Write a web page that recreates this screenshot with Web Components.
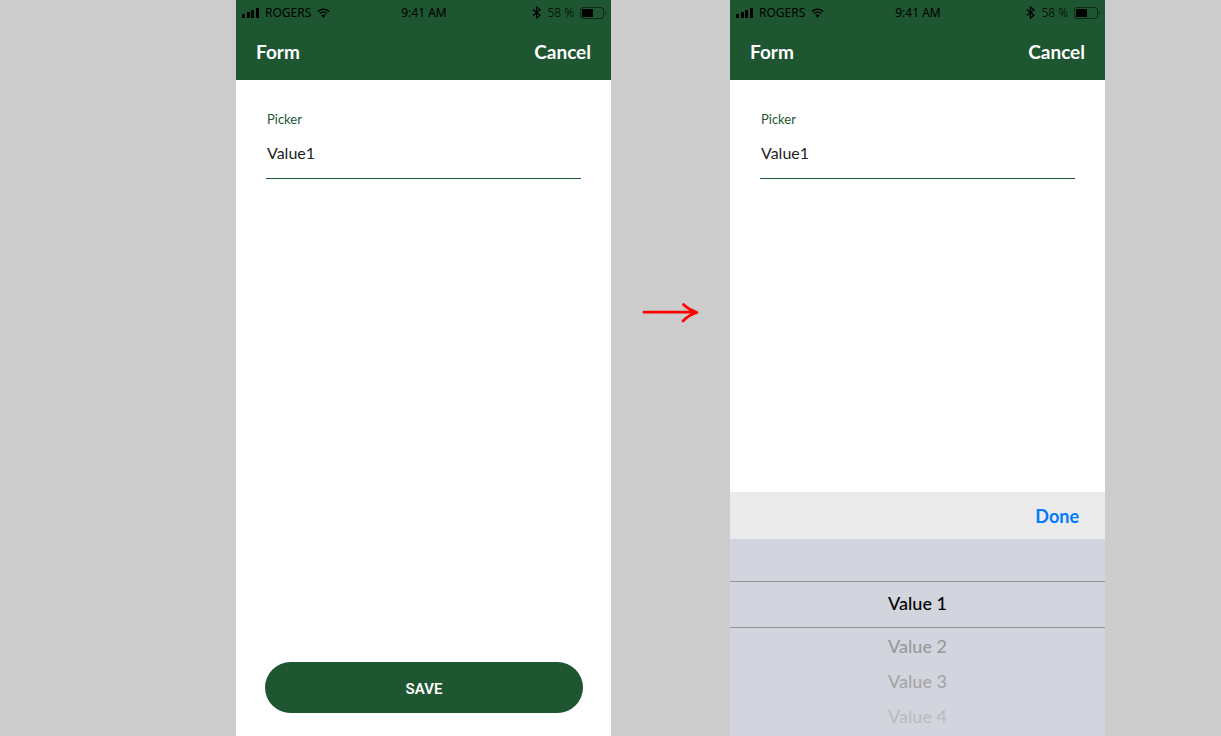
<!DOCTYPE html>
<html lang="en">
<head>
<meta charset="UTF-8">
<meta name="viewport" content="width=device-width, initial-scale=1">
<title>Form picker</title>
<style>
    body {
        margin: 0;
        background-color: #cccccc;
        font-family: Lato, sans-serif;
    }
</style>
</head>
<body>
<picker-flow>
    <phone-screen slot="before">
        <status-bar slot="status" carrier="ROGERS" time="9:41 AM" battery="58 %"></status-bar>
        <nav-bar slot="nav" main-text="Form" action="Cancel"></nav-bar>
        <picker-field label="Picker" value="Value1"></picker-field>
        <save-button slot="bottom">SAVE</save-button>
    </phone-screen>
    <flow-arrow slot="arrow"></flow-arrow>
    <phone-screen slot="after">
        <status-bar slot="status" carrier="ROGERS" time="9:41 AM" battery="58 %"></status-bar>
        <nav-bar slot="nav" main-text="Form" action="Cancel"></nav-bar>
        <picker-field label="Picker" value="Value1"></picker-field>
        <picker-wheel slot="bottom" done="Done" values="Value 1,Value 2,Value 3,Value 4"></picker-wheel>
    </phone-screen>
</picker-flow>

<script>
class PickerFlow extends HTMLElement {
    constructor() {
        super();
        this.attachShadow({ mode: "open" });
        this.shadowRoot.innerHTML = `
            <style>
                :host {
                    display: grid;
                    grid-template-columns: 236fr 375fr 119fr 375fr 116fr;
                    min-height: 100vh;
                }
                .before { grid-column: 2; }
                .arrow { grid-column: 3; }
                .after { grid-column: 4; }
                .before, .after {
                    display: grid;
                }
            </style>
            <div class="before"><slot name="before"></slot></div>
            <div class="arrow"><slot name="arrow"></slot></div>
            <div class="after"><slot name="after"></slot></div>
        `;
    }
}
customElements.define("picker-flow", PickerFlow);

class PhoneScreen extends HTMLElement {
    constructor() {
        super();
        this.attachShadow({ mode: "open" });
        this.shadowRoot.innerHTML = `
            <style>
                :host {
                    display: flex;
                    flex-direction: column;
                    background-color: #ffffff;
                }
                header {
                    background-color: #1e5631;
                }
                main {
                    flex: 1;
                    padding: 29px 30px 0;
                }
            </style>
            <header>
                <slot name="status"></slot>
                <slot name="nav"></slot>
            </header>
            <main><slot></slot></main>
            <slot name="bottom"></slot>
        `;
    }
}
customElements.define("phone-screen", PhoneScreen);

class StatusBar extends HTMLElement {
    constructor() {
        super();
        this.attachShadow({ mode: "open" });
        this.shadowRoot.innerHTML = `
            <style>
                :host {
                    display: grid;
                    grid-template-columns: 1fr auto 1fr;
                    align-items: center;
                    height: 25px;
                    padding: 0 5px 0 6px;
                    font-family: "Noto Sans", sans-serif;
                    font-size: 12px;
                    color: #000000;
                }
                .left, .right {
                    display: flex;
                    align-items: center;
                }
                .left { gap: 6px; }
                .right {
                    justify-content: flex-end;
                    gap: 6px;
                }
                .battery {
                    font-weight: 300;
                }
                svg {
                    display: block;
                    flex: none;
                }
            </style>
            <div class="left">
                <svg width="17" height="12" viewBox="0 0 17 12" aria-hidden="true">
                    <path d="M0 7h3v4H0zM5 5h3v6H5zM9 3h3v8H9zM14 1h3v10h-3z"/>
                </svg>
                <span>${this.getAttribute("carrier")}</span>
                <svg width="13" height="10" viewBox="0 0 13 10" aria-hidden="true">
                    <path d="M.8 3.6Q6.5-1 12.2 3.6M2.8 5.7Q6.5 2.6 10.2 5.7" fill="none" stroke="#000" stroke-width="1.4"/>
                    <path d="M4.3 7.3Q6.5 5.6 8.7 7.3L6.5 9.7z"/>
                </svg>
            </div>
            <span>${this.getAttribute("time")}</span>
            <div class="right">
                <svg width="9" height="13" viewBox="0 0 9 13" aria-hidden="true">
                    <path d="M1 3.5L8 9.2 4.5 12V1L8 3.8 1 9.5" fill="none" stroke="#000" stroke-width="1.2"/>
                </svg>
                <span class="battery">${this.getAttribute("battery")}</span>
                <svg width="26" height="12" viewBox="0 0 26 12" aria-hidden="true">
                    <rect x=".5" y=".5" width="23" height="11" rx="2.5" fill="none" stroke="#0d2b17"/>
                    <rect x="2" y="2" width="11" height="8"/>
                    <path d="M25 4q2 2 0 4z" fill="#0d2b17"/>
                </svg>
            </div>
        `;
    }
}
customElements.define("status-bar", StatusBar);

class NavBar extends HTMLElement {
    constructor() {
        super();
        this.attachShadow({ mode: "open" });
        this.shadowRoot.innerHTML = `
            <style>
                :host {
                    display: flex;
                    align-items: center;
                    justify-content: space-between;
                    height: 55px;
                    padding: 0 20px;
                    color: #ffffff;
                }
                h1, button {
                    margin: 0;
                    padding: 0 0 2px;
                    font: inherit;
                    font-size: 19px;
                    font-weight: 700;
                }
                button {
                    border: none;
                    background: none;
                    color: inherit;
                    cursor: pointer;
                }
            </style>
            <h1>${this.getAttribute("main-text")}</h1>
            <button type="button">${this.getAttribute("action")}</button>
        `;
    }
}
customElements.define("nav-bar", NavBar);

class PickerField extends HTMLElement {
    constructor() {
        super();
        this.attachShadow({ mode: "open" });
        this.shadowRoot.innerHTML = `
            <style>
                :host {
                    display: flex;
                    flex-direction: column;
                }
                label {
                    padding-left: 1px;
                    font-size: 13px;
                    line-height: 20px;
                    color: #1e5631;
                }
                select {
                    appearance: none;
                    height: 50px;
                    margin: 0;
                    padding: 0 0 3px 1px;
                    border: none;
                    border-bottom: 1px solid #1e5631;
                    border-radius: 0;
                    background: none;
                    font: inherit;
                    font-size: 16px;
                    color: #222222;
                }
            </style>
            <label for="picker">${this.getAttribute("label")}</label>
            <select id="picker">
                <option>${this.getAttribute("value")}</option>
            </select>
        `;
    }
}
customElements.define("picker-field", PickerField);

class SaveButton extends HTMLElement {
    constructor() {
        super();
        this.attachShadow({ mode: "open" });
        this.shadowRoot.innerHTML = `
            <style>
                :host {
                    display: flex;
                    padding: 0 28px 23px 29px;
                }
                button {
                    flex: 1;
                    height: 51px;
                    padding: 2px 0 0;
                    border: none;
                    border-radius: 26px;
                    background-color: #1e5631;
                    color: #ffffff;
                    font-family: Roboto, sans-serif;
                    font-size: 15px;
                    font-weight: 600;
                    cursor: pointer;
                }
            </style>
            <button type="button"><slot></slot></button>
        `;
    }
}
customElements.define("save-button", SaveButton);

class PickerWheel extends HTMLElement {
    constructor() {
        super();
        this.attachShadow({ mode: "open" });
        const values = this.getAttribute("values").split(",");
        this.shadowRoot.innerHTML = `
            <style>
                :host {
                    display: block;
                    background-color: #d2d5dd;
                }
                button {
                    padding: 0;
                    border: none;
                    background: none;
                    font: inherit;
                    font-size: 18px;
                    cursor: pointer;
                }
                .toolbar {
                    display: flex;
                    justify-content: flex-end;
                    height: 47px;
                    padding: 0 26px;
                    background-color: #ebebeb;
                }
                .done {
                    font-weight: 700;
                    color: #007aff;
                }
                .values {
                    display: flex;
                    flex-direction: column;
                    padding: 42px 0 1px;
                }
                .values button {
                    height: 35px;
                    padding-bottom: 4px;
                    font-weight: 500;
                    color: #999999;
                }
                .values button:first-child {
                    height: 47px;
                    margin-bottom: 2px;
                    border-top: 1px solid #939499;
                    border-bottom: 1px solid #939499;
                    color: #000000;
                }
                .values button:nth-child(3) { color: #a5a5a7; }
                .values button:nth-child(4) { color: #bbbcc0; }
            </style>
            <div class="toolbar">
                <button class="done" type="button">${this.getAttribute("done")}</button>
            </div>
            <div class="values" role="listbox" aria-label="Picker">
                ${values.map((v, i) => `<button type="button" role="option" aria-selected="${i === 0}">${v}</button>`).join("")}
            </div>
        `;
    }
}
customElements.define("picker-wheel", PickerWheel);

class FlowArrow extends HTMLElement {
    constructor() {
        super();
        this.attachShadow({ mode: "open" });
        this.shadowRoot.innerHTML = `
            <style>
                :host {
                    display: flex;
                    justify-content: center;
                    padding-top: 302px;
                }
            </style>
            <svg width="58" height="22" viewBox="0 0 58 22" aria-hidden="true">
                <path d="M2 10.2H54M41.5 2.5Q46.500 7.500 55 10.500Q46.500 13 41 19" fill="none" stroke="#ff0000" stroke-width="2.8" stroke-linecap="round" stroke-linejoin="round"/>
            </svg>
        `;
    }
}
customElements.define("flow-arrow", FlowArrow);
</script>
</body>
</html>
